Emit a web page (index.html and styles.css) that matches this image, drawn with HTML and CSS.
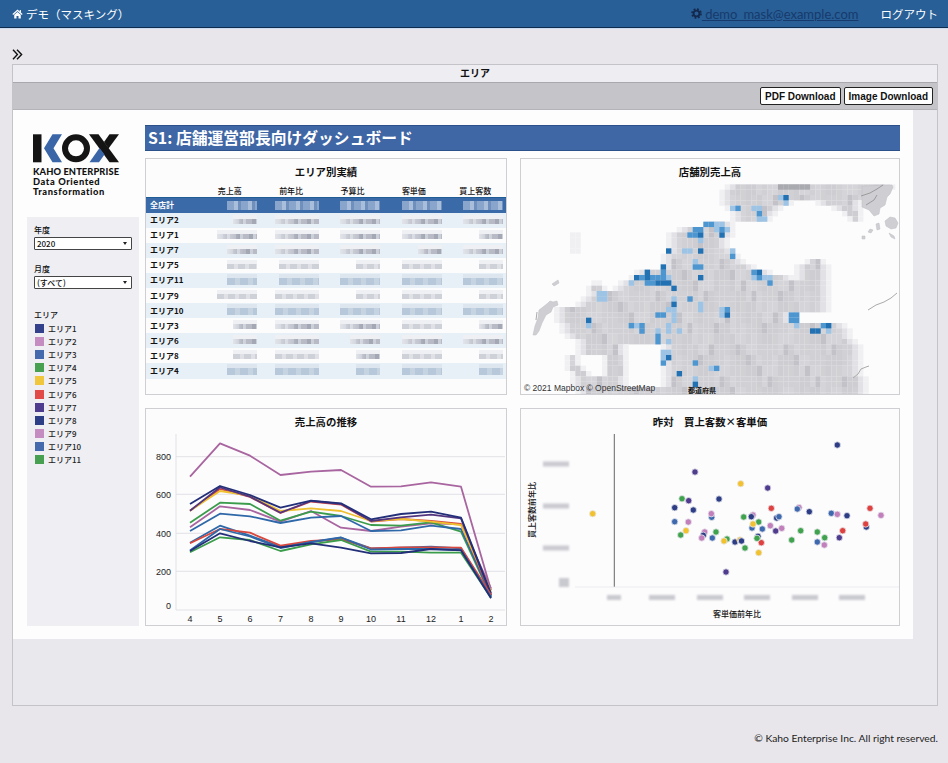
FILE: index.html
```html
<!DOCTYPE html>
<html lang="ja">
<head>
    <meta charset="UTF-8">
    <meta name="viewport" content="width=device-width, initial-scale=1.0">
    <title>デモ（マスキング）</title>
    <link rel="stylesheet" href="styles.css">
</head>
<body>
    <div class="navbar">
        <div class="brand">
            <svg class="home-icon" viewBox="0 0 12 11"><polyline points="0.8,6 6,1.4 11.2,6" fill="none" stroke="#fff" stroke-width="1.3"/><rect x="8.4" y="1.2" width="1.4" height="2.8" fill="#fff"/><path d="M2.4 6.3L6 3.2l3.6 3.1V10.4H7.1V7.6H4.9v2.8H2.4z" fill="#fff"/></svg>
            <span>デモ（マスキング）</span>
        </div>
        <div class="nav-right">
            <svg class="gear-icon" viewBox="0 0 12 12"><circle cx="6" cy="6" r="3.2" fill="none" stroke="#14294d" stroke-width="2"/><circle cx="6" cy="6" r="4.8" fill="none" stroke="#14294d" stroke-width="2" stroke-dasharray="2 1.77"/></svg>
            <a class="user-mail" href="#">&nbsp;demo_mask@example.com</a>
            <span class="logout">ログアウト</span>
        </div>
    </div>

    <div class="toggle-row">
        <svg class="toggle-icon" viewBox="0 0 11 11"><polyline points="1,0.8 5.4,5.5 1,10.2" fill="none" stroke="#111" stroke-width="1.4"/><polyline points="5,0.8 9.6,5.5 5,10.2" fill="none" stroke="#111" stroke-width="1.4"/></svg>
    </div>

    <div class="panel">
        <div class="tab-title">エリア</div>
        <div class="toolbar">
            <button class="tool-button" type="button">PDF Download</button>
            <button class="tool-button" type="button">Image Download</button>
        </div>

        <div class="dashboard">
            <div class="side">
                <div class="logo">
                    <svg class="logo-mark" viewBox="33 134 86 29">
                        <rect x="33" y="134.3" width="8.5" height="28" fill="#141414"/>
                        <polygon points="62,134.3 52.5,134.3 44,148.3 52.5,162.3 62,162.3 53.5,148.3" fill="#3a66a8"/>
                        <circle cx="76" cy="148.3" r="11" fill="none" stroke="#141414" stroke-width="6"/>
                        <polygon points="89,134.3 98.5,134.3 119,162.3 109.5,162.3" fill="#141414"/>
                        <polygon points="109.5,134.3 119,134.3 108.5,148.5 104,142" fill="#141414"/>
                        <polygon points="99.5,148 104.5,154.5 99,162.3 89.5,162.3" fill="#3a66a8"/>
                    </svg>
                    <div class="logo-name">KAHO ENTERPRISE</div>
                    <div class="logo-sub">Data Oriented</div>
                    <div class="logo-sub">Transformation</div>
                </div>
                <div class="filters">
                    <div class="filter-label">年度</div>
                    <div class="select-box"><span>2020</span><i class="caret"></i></div>
                    <div class="filter-label month-label">月度</div>
                    <div class="select-box"><span>(すべて)</span><i class="caret"></i></div>
                    <div class="filter-label area-label">エリア</div>
                    <ul class="legend">
                        <li><i class="swatch c1"></i>エリア1</li>
                        <li><i class="swatch c2"></i>エリア2</li>
                        <li><i class="swatch c3"></i>エリア3</li>
                        <li><i class="swatch c4"></i>エリア4</li>
                        <li><i class="swatch c5"></i>エリア5</li>
                        <li><i class="swatch c6"></i>エリア6</li>
                        <li><i class="swatch c7"></i>エリア7</li>
                        <li><i class="swatch c8"></i>エリア8</li>
                        <li><i class="swatch c2"></i>エリア9</li>
                        <li><i class="swatch c3"></i>エリア10</li>
                        <li><i class="swatch c4"></i>エリア11</li>
                    </ul>
                </div>
            </div>

            <div class="main">
                <h1 class="board-title">S1: 店舗運営部長向けダッシュボード</h1>
                <div class="cards">
                    <div class="card">
                        <div class="card-title">エリア別実績</div>
                        <table class="area-table">
                            <thead>
                                <tr><th></th><th>売上高</th><th>前年比</th><th>予算比</th><th>客単価</th><th>買上客数</th></tr>
                            </thead>
                            <tbody>
                                <tr class="total"><td>全店計</td><td><span class="mask w1"></span></td><td><span class="mask w3"></span></td><td><span class="mask w2"></span></td><td><span class="mask w2"></span></td><td><span class="mask w2"></span></td></tr>
                                <tr><td>エリア2</td><td><span class="mask w4"></span></td><td><span class="mask w3"></span></td><td><span class="mask w2"></span></td><td><span class="mask w2"></span></td><td><span class="mask w2"></span></td></tr>
                                <tr><td>エリア1</td><td><span class="mask w2"></span></td><td><span class="mask w3"></span></td><td><span class="mask w2"></span></td><td><span class="mask w2"></span></td><td><span class="mask w4"></span></td></tr>
                                <tr><td>エリア7</td><td><span class="mask w1"></span></td><td><span class="mask w3"></span></td><td><span class="mask w2"></span></td><td><span class="mask w4"></span></td><td><span class="mask w2"></span></td></tr>
                                <tr><td>エリア5</td><td><span class="mask w1 pale"></span></td><td><span class="mask w2 pale"></span></td><td><span class="mask w4 pale"></span></td><td><span class="mask w2 pale"></span></td><td><span class="mask w4 pale"></span></td></tr>
                                <tr><td>エリア11</td><td><span class="mask w1 blue"></span></td><td><span class="mask w2 blue"></span></td><td><span class="mask w2 blue"></span></td><td><span class="mask w2 blue"></span></td><td><span class="mask w2 blue"></span></td></tr>
                                <tr><td>エリア9</td><td><span class="mask w2 pale"></span></td><td><span class="mask w3 pale"></span></td><td><span class="mask w4 pale"></span></td><td><span class="mask w2 pale"></span></td><td><span class="mask w4 pale"></span></td></tr>
                                <tr><td>エリア10</td><td><span class="mask w1 blue"></span></td><td><span class="mask w3 blue"></span></td><td><span class="mask w2 blue"></span></td><td><span class="mask w2 blue"></span></td><td><span class="mask w2 blue"></span></td></tr>
                                <tr><td>エリア3</td><td><span class="mask w4"></span></td><td><span class="mask w3"></span></td><td><span class="mask w2"></span></td><td><span class="mask w2 pale"></span></td><td><span class="mask w4"></span></td></tr>
                                <tr><td>エリア6</td><td><span class="mask w4"></span></td><td><span class="mask w3"></span></td><td><span class="mask w1"></span></td><td><span class="mask w2"></span></td><td><span class="mask w2"></span></td></tr>
                                <tr><td>エリア8</td><td><span class="mask w4 pale"></span></td><td><span class="mask w3 pale"></span></td><td><span class="mask w4"></span></td><td><span class="mask w2 pale"></span></td><td><span class="mask w4 pale"></span></td></tr>
                                <tr><td>エリア4</td><td><span class="mask w1 blue"></span></td><td><span class="mask w3 blue"></span></td><td><span class="mask w4 blue"></span></td><td><span class="mask w2 blue"></span></td><td><span class="mask w4 blue"></span></td></tr>
                            </tbody>
                        </table>
                    </div>

                    <div class="card">
                        <div class="card-title">店舗別売上高</div>
                        <svg id="store-map" class="chart" viewBox="521 184 378 210">
                            <g id="map-cells"></g>
                            <path class="coast" d="M862 186l30-1 1 2-3 7-3 3-2 8-5 3-1 6-5 2-5-6-7-3z"/>
                            <path class="coast-line" d="M861 196l9-3 7-4 6-4M866 205l8-5 3-5"/>
                            <path class="coast" d="M885 221l5-4 5 1 3 5-2 5-5 1-5-3zM876 224l3-1 1 6-3 1zM870 229l3 1-2 3-3-1zM889 233l5 3 1 3-4-2zM862 236l3 0 0 3-3 0z"/>
                            <path class="coast-thin" d="M868 310l8-5 8-3 7-4 6-5"/>
                            <path class="coast" d="M533 335l2-9 3-8 1-8 4-3 5-4 2-2 3 1 4-1 1 4-5 2-2 5-5 3-4 8-3 8-3 4zM552 284l6-4 1 3-5 3z"/>
                            <path class="coast-thin" d="M853 378l5-4 3-5 5-2 3-1M537 312l-1 8"/>
                            <text class="map-credit" x="524" y="391">© 2021 Mapbox © OpenStreetMap</text>
                            <text class="map-field" x="688" y="393">都道府県</text>
                        </svg>
                    </div>

                    <div class="card">
                        <div class="card-title">売上高の推移</div>
                        <svg class="chart" viewBox="146 434 360 191">
                            <g class="grid-lines">
                                <line x1="176" y1="456.7" x2="505" y2="456.7"/>
                                <line x1="176" y1="494.3" x2="505" y2="494.3"/>
                                <line x1="176" y1="533.3" x2="505" y2="533.3"/>
                                <line x1="176" y1="571.3" x2="505" y2="571.3"/>
                                <line x1="176" y1="610" x2="505" y2="610"/>
                                <line x1="176" y1="434" x2="176" y2="610"/>
                            </g>
                            <g class="tick-text end">
                                <text x="171" y="460">800</text>
                                <text x="171" y="498">600</text>
                                <text x="171" y="537">400</text>
                                <text x="171" y="575">200</text>
                                <text x="171" y="609">0</text>
                            </g>
                            <g class="tick-text middle">
                                <text x="190" y="622">4</text>
                                <text x="220" y="622">5</text>
                                <text x="250" y="622">6</text>
                                <text x="280.5" y="622">7</text>
                                <text x="311" y="622">8</text>
                                <text x="341" y="622">9</text>
                                <text x="371" y="622">10</text>
                                <text x="401" y="622">11</text>
                                <text x="431" y="622">12</text>
                                <text x="461" y="622">1</text>
                                <text x="491" y="622">2</text>
                            </g>
                            <g class="series">
                                <polyline class="l-pink" points="190,476.7 220,443.3 250,455.7 280.5,475 311,471.7 341,470 371,486.7 401,486.3 431,482.3 461,486.7 491,590"/>
                                <polyline class="l-pink" points="190,527.3 220,506.3 250,510 280.5,521.7 311,511 341,527.7 371,531 401,526.7 431,523.3 461,524.3 491,588.3"/>
                                <polyline class="l-green" points="190,522.7 220,502.7 250,504 280.5,520.7 311,511.7 341,516 371,525 401,525.7 431,522.3 461,531.7 491,596.7"/>
                                <polyline class="l-blue" points="190,531 220,513.7 250,516.3 280.5,523 311,517.7 341,516 371,531 401,530.3 431,525.7 461,529 491,595.7"/>
                                <polyline class="l-red" points="190,510.7 220,489 250,497 280.5,513 311,501.5 341,504.5 371,521.5 401,519 431,521 461,524 491,595"/>
                                <polyline class="l-yellow" points="190,510.7 220,491 250,495.7 280.5,511 311,508.3 341,511 371,521 401,519 431,521.7 461,525 491,591.7"/>
                                <polyline class="l-purple" points="190,510.7 220,487.3 250,496.7 280.5,512.7 311,501 341,504 371,521 401,517.3 431,514.7 461,518.3 491,595"/>
                                <polyline class="l-navy" points="190,504 220,486 250,495 280.5,507.7 311,500.7 341,503.3 371,519.3 401,514 431,511.7 461,517.7 491,593.3"/>
                                <polyline class="l-blue" points="190,542.7 220,525.7 250,535.7 280.5,546.7 311,542.3 341,537.7 371,548.3 401,547.7 431,546.7 461,548.3 491,596.7"/>
                                <polyline class="l-red" points="190,543.3 220,529 250,532.7 280.5,545.7 311,541 341,539.3 371,548.3 401,547.3 431,547.3 461,547.7 491,595"/>
                                <polyline class="l-green" points="190,552.3 220,537.3 250,540 280.5,551 311,544.3 341,540 371,551.7 401,551.7 431,552.7 461,552.7 491,597.7"/>
                                <polyline class="l-blue" points="190,550.5 220,529 250,536.5 280.5,548 311,542 341,537.5 371,549.5 401,549 431,549 461,550 491,597"/>
                                <polyline class="l-navy" points="190,551 220,533.3 250,541 280.5,547.3 311,543.3 341,547.7 371,553.3 401,553 431,549 461,550.3 491,598.3"/>
                            </g>
                        </svg>
                    </div>

                    <div class="card">
                        <div class="card-title">昨対　買上客数×客単価</div>
                        <svg class="chart" viewBox="521 434 378 191">
                            <line class="base-line" x1="575" y1="587" x2="899" y2="587"/>
                            <line class="zero-line" x1="614.3" y1="434" x2="614.3" y2="586.7"/>
                            <g class="blur-ticks">
                                <rect x="543" y="461.5" width="26" height="5"/>
                                <rect x="543" y="503.5" width="26" height="5"/>
                                <rect x="543" y="545.5" width="26" height="5"/>
                                <rect x="559" y="578" width="10" height="9"/>
                                <rect x="607" y="595" width="14" height="5"/>
                                <rect x="649" y="595" width="26" height="5"/>
                                <rect x="697" y="595" width="26" height="5"/>
                                <rect x="744" y="595" width="26" height="5"/>
                                <rect x="792" y="595" width="26" height="5"/>
                                <rect x="839" y="595" width="26" height="5"/>
                            </g>
                            <text class="axis-title" x="737" y="617">客単価前年比</text>
                            <text class="axis-title" transform="translate(535 510) rotate(-90)">買上客数前年比</text>
                            <g class="dots">
                                <circle class="d-navy" cx="837.3" cy="445" r="3.2"/>
                                <circle class="d-purple" cx="695" cy="472" r="3.2"/>
                                <circle class="d-yellow" cx="740.7" cy="483.7" r="3.2"/>
                                <circle class="d-purple" cx="767.7" cy="488" r="3.2"/>
                                <circle class="d-green" cx="682" cy="498.7" r="3.2"/>
                                <circle class="d-purple" cx="688.7" cy="500.7" r="3.2"/>
                                <circle class="d-navy" cx="719" cy="499" r="3.2"/>
                                <circle class="d-navy" cx="674.7" cy="507.7" r="3.2"/>
                                <circle class="d-navy" cx="693.3" cy="510" r="3.2"/>
                                <circle class="d-red" cx="771.3" cy="508.3" r="3.2"/>
                                <circle class="d-pink" cx="799" cy="507.5" r="3.2"/>
                                <circle class="d-blue" cx="797.3" cy="509" r="3.2"/>
                                <circle class="d-navy" cx="809.3" cy="511.7" r="3.2"/>
                                <circle class="d-blue" cx="831.3" cy="513.3" r="3.2"/>
                                <circle class="d-pink" cx="837.3" cy="514.3" r="3.2"/>
                                <circle class="d-navy" cx="847" cy="515.7" r="3.2"/>
                                <circle class="d-red" cx="870" cy="508.3" r="3.2"/>
                                <circle class="d-pink" cx="881" cy="515.3" r="3.2"/>
                                <circle class="d-yellow" cx="592.7" cy="513.7" r="3.2"/>
                                <circle class="d-blue" cx="711.7" cy="517.3" r="3.2"/>
                                <circle class="d-pink" cx="711.3" cy="513.7" r="3.2"/>
                                <circle class="d-green" cx="743.7" cy="517" r="3.2"/>
                                <circle class="d-pink" cx="753" cy="515" r="3.2"/>
                                <circle class="d-navy" cx="751.3" cy="516.7" r="3.2"/>
                                <circle class="d-navy" cx="776.7" cy="518" r="3.2"/>
                                <circle class="d-blue" cx="779" cy="516.7" r="3.2"/>
                                <circle class="d-blue" cx="674.7" cy="521.7" r="3.2"/>
                                <circle class="d-pink" cx="688.3" cy="522" r="3.2"/>
                                <circle class="d-green" cx="758.7" cy="522" r="3.2"/>
                                <circle class="d-blue" cx="752" cy="528" r="3.2"/>
                                <circle class="d-yellow" cx="753" cy="524" r="3.2"/>
                                <circle class="d-pink" cx="770.3" cy="525.7" r="3.2"/>
                                <circle class="d-blue" cx="762.3" cy="529" r="3.2"/>
                                <circle class="d-navy" cx="866.3" cy="527" r="3.2"/>
                                <circle class="d-red" cx="865.7" cy="524" r="3.2"/>
                                <circle class="d-yellow" cx="686" cy="530.7" r="3.2"/>
                                <circle class="d-green" cx="680.7" cy="535" r="3.2"/>
                                <circle class="d-pink" cx="704.7" cy="532" r="3.2"/>
                                <circle class="d-green" cx="716" cy="532" r="3.2"/>
                                <circle class="d-pink" cx="781.7" cy="528.3" r="3.2"/>
                                <circle class="d-purple" cx="775.7" cy="531" r="3.2"/>
                                <circle class="d-green" cx="800.7" cy="530.7" r="3.2"/>
                                <circle class="d-green" cx="817.3" cy="532" r="3.2"/>
                                <circle class="d-red" cx="842.7" cy="530.7" r="3.2"/>
                                <circle class="d-navy" cx="703.3" cy="535.3" r="3.2"/>
                                <circle class="d-pink" cx="701.7" cy="538" r="3.2"/>
                                <circle class="d-blue" cx="712.3" cy="538" r="3.2"/>
                                <circle class="d-green" cx="727" cy="539" r="3.2"/>
                                <circle class="d-yellow" cx="724" cy="541" r="3.2"/>
                                <circle class="d-navy" cx="735" cy="542" r="3.2"/>
                                <circle class="d-yellow" cx="740" cy="540" r="3.2"/>
                                <circle class="d-navy" cx="741.5" cy="541" r="3.2"/>
                                <circle class="d-red" cx="761.3" cy="542.7" r="3.2"/>
                                <circle class="d-navy" cx="758" cy="536.3" r="3.2"/>
                                <circle class="d-green" cx="757" cy="538.3" r="3.2"/>
                                <circle class="d-green" cx="791.7" cy="540" r="3.2"/>
                                <circle class="d-blue" cx="817.3" cy="542" r="3.2"/>
                                <circle class="d-green" cx="824.7" cy="537.7" r="3.2"/>
                                <circle class="d-purple" cx="839.3" cy="537.7" r="3.2"/>
                                <circle class="d-pink" cx="824.3" cy="545" r="3.2"/>
                                <circle class="d-green" cx="745" cy="548" r="3.2"/>
                                <circle class="d-yellow" cx="758.7" cy="552.7" r="3.2"/>
                                <circle class="d-purple" cx="726" cy="572" r="3.2"/>
                            </g>
                        </svg>
                    </div>
                </div>
            </div>
        </div>
    </div>

    <div class="footer">© Kaho Enterprise Inc. All right reserved.</div>

    <script src="map.js"></script>
</body>
</html>
```

FILE: styles.css
```css
body {
    font-family: "Noto Sans CJK JP", "Noto Sans", sans-serif;
    margin: 0;
    padding: 0;
    background-color: #e8e6eb;
    color: #111;
}
.navbar {
    height: 27px;
    background-color: #285f97;
    border-bottom: 1px solid #0f2b50;
    box-shadow: 0 1px 0 #cddcf0;
    color: white;
    padding: 0 10px 0 12px;
    display: flex;
    justify-content: space-between;
    align-items: center;
    font-size: 11.5px;
}
.brand {
    display: flex;
    align-items: center;
    gap: 3px;
}
.home-icon {
    width: 11px;
    height: 10px;
}
.nav-right {
    display: flex;
    align-items: center;
}
.gear-icon {
    width: 11px;
    height: 11px;
}
.user-mail {
    font-family: Lato, sans-serif;
    font-size: 13px;
    color: #173a6c;
    margin-right: 22px;
}
.toggle-row {
    height: 36px;
    padding-left: 12px;
    display: flex;
    align-items: flex-end;
}
.toggle-icon {
    width: 11px;
    height: 11px;
    margin-bottom: 4px;
}
.panel {
    margin: 0 10px 0 12px;
    height: 640px;
    border: 1px solid #c3c3c8;
    background-color: #e9e8ed;
}
.tab-title {
    height: 17px;
    line-height: 16px;
    text-align: center;
    font-size: 10px;
    font-weight: 700;
    background-color: #eeedf1;
}
.toolbar {
    height: 28px;
    box-sizing: border-box;
    border-top: 1px solid #a9a9ad;
    border-bottom: 1px solid #b4b4b8;
    background-color: #c5c5c9;
    display: flex;
    justify-content: flex-end;
    align-items: center;
    gap: 3px;
    padding-right: 4px;
}
.tool-button {
    height: 18px;
    padding: 0 4px;
    background-color: #fff;
    color: #111;
    border: 1px solid #222;
    border-radius: 2px;
    font-family: "Liberation Sans", Arial, sans-serif;
    font-size: 10px;
    font-weight: 700;
}
.dashboard {
    width: 900px;
    height: 529px;
    box-sizing: border-box;
    padding: 15px 13px 13px 14px;
    background-color: #fdfdfe;
    display: flex;
    gap: 6px;
}
.side {
    width: 112px;
    display: flex;
    flex-direction: column;
}
.logo {
    height: 92px;
    padding: 9px 0 0 6px;
    box-sizing: border-box;
}
.logo-mark {
    display: block;
    width: 86px;
    height: 29px;
    margin-bottom: 4px;
}
.logo-name,
.logo-sub {
    font-family: Lato, sans-serif;
    font-weight: 900;
    color: #111;
    line-height: 10px;
}
.logo-name {
    font-size: 9.3px;
    letter-spacing: 0.1px;
}
.logo-sub {
    font-size: 9.3px;
    letter-spacing: 0.6px;
}
.filters {
    flex: 1;
    background-color: #eeeef3;
    padding: 7px 7px 0;
    font-size: 8px;
    font-weight: 500;
}
.filter-label {
    line-height: 12px;
    margin-bottom: 1px;
}
.month-label {
    margin-top: 13px;
}
.area-label {
    margin-top: 20px;
}
.select-box {
    height: 13px;
    box-sizing: border-box;
    border: 1px solid #444;
    border-radius: 1px;
    background-color: #fff;
    padding: 0 4px 0 2px;
    display: flex;
    justify-content: space-between;
    align-items: center;
    font-size: 8px;
}
.caret {
    width: 0;
    height: 0;
    border-left: 2.5px solid transparent;
    border-right: 2.5px solid transparent;
    border-top: 3px solid #222;
}
.legend {
    list-style: none;
    margin: 0;
    padding: 0 0 0 1px;
}
.legend li {
    height: 13.1px;
    display: flex;
    align-items: center;
    gap: 4px;
    font-size: 8px;
    color: #222;
}
.swatch {
    width: 9px;
    height: 9px;
    border: 0;
}
.c1 { background-color: #33418c; }
.c2 { background-color: #c48cc0; }
.c3 { background-color: #4469ad; }
.c4 { background-color: #47a04f; }
.c5 { background-color: #f0c63c; }
.c6 { background-color: #e24a47; }
.c7 { background-color: #503c8e; }
.c8 { background-color: #2d3e86; }
.main {
    flex: 1;
    display: flex;
    flex-direction: column;
}
.board-title {
    margin: 0 0 7px;
    height: 26px;
    box-sizing: border-box;
    line-height: 24px;
    padding-left: 3px;
    font-size: 15.8px;
    font-weight: 700;
    color: #fff;
    background-color: #3f66a5;
    border-top: 1px solid #2c5089;
    border-bottom: 1px solid #2c5089;
}
.cards {
    flex: 1;
    display: grid;
    grid-template-columns: 362px 380px;
    grid-template-rows: 237px 218px;
    gap: 13px;
}
.card {
    border: 1px solid #cfcfd3;
    background-color: #fcfcfd;
    display: flex;
    flex-direction: column;
    overflow: hidden;
}
.card-title {
    height: 25px;
    line-height: 25px;
    text-align: center;
    font-size: 10.4px;
    font-weight: 700;
    flex: none;
}
.chart {
    display: block;
    flex: 1;
    min-height: 0;
    width: 100%;
}
.area-table {
    width: 100%;
    table-layout: fixed;
    border-collapse: collapse;
    font-size: 8px;
}
.area-table th {
    height: 13px;
    padding: 0;
    font-weight: 500;
    line-height: 10px;
    width: 61.3px;
}
.area-table th:first-child {
    width: 53px;
}
.area-table td {
    height: 15.1px;
    padding: 0 3px 0 0;
    line-height: 10px;
}
.area-table td:first-child {
    padding-left: 4px;
    font-weight: 700;
}
.area-table tbody tr:nth-child(even) {
    background-color: #e8f0f7;
}
.area-table tbody tr.total {
    background-color: #3a6aa8;
    color: #fff;
}
.area-table .total td {
    height: 14.5px;
    border-top: 1px solid #1f5d94;
}
.mask {
    display: block;
    margin: 2px 0 0 auto;
    height: 5px;
    background:
        linear-gradient(90deg, rgba(240, 242, 246, 0.75), rgba(240, 242, 246, 0) 55%),
        repeating-linear-gradient(90deg, #b8bbc6 0 6px, #a4a8b5 6px 10px, #ccd0d8 10px 13px);
    box-shadow: 0 -4px 0 #eef0f4;
    filter: blur(0.6px);
}
.w1 { width: 30px; }
.w2 { width: 40px; }
.w3 { width: 44px; }
.w4 { width: 24px; }
.mask.pale {
    background: repeating-linear-gradient(90deg, #cfd1d8 0 7px, #dfe1e6 7px 11px);
}
.mask.blue {
    height: 7px;
    background: repeating-linear-gradient(90deg, #b7c8da 0 8px, #c6d4e2 8px 13px);
    box-shadow: 0 -4px 0 #dde6ef;
}
.total .mask {
    margin-top: 0;
    height: 9px;
    background: repeating-linear-gradient(90deg, #8aa5cb 0 7px, #a9bedb 7px 11px, #6f90bd 11px 14px);
    box-shadow: none;
}
.grid-lines line {
    stroke: #e2e2e6;
    stroke-width: 1;
}
.tick-text text {
    font-family: "Liberation Sans", Arial, sans-serif;
    font-size: 9px;
    fill: #222;
}
.tick-text.end text {
    text-anchor: end;
}
.tick-text.middle text {
    text-anchor: middle;
}
.series polyline {
    fill: none;
    stroke-width: 1.8;
    stroke-linejoin: round;
}
.l-pink { stroke: #a8659f; }
.l-green { stroke: #3b9c4b; }
.l-blue { stroke: #2f68a8; }
.l-yellow { stroke: #efc02f; }
.l-purple { stroke: #53357f; }
.l-red { stroke: #d9483e; }
.l-navy { stroke: #232f78; }
.base-line {
    stroke: #ececf0;
}
.zero-line {
    stroke: #666;
}
.blur-ticks rect {
    fill: #c9c9d0;
    filter: blur(0.8px);
}
.axis-title {
    font-size: 8px;
    font-weight: 500;
    text-anchor: middle;
    fill: #111;
}
.dots circle {
    stroke: #e8e8ee;
    stroke-width: 0.8;
}
.d-navy { fill: #2d3e86; }
.d-purple { fill: #503c8e; }
.d-blue { fill: #3f69ae; }
.d-green { fill: #3fa34d; }
.d-yellow { fill: #f1c12e; }
.d-red { fill: #df4140; }
.d-pink { fill: #c17fbb; }
.coast {
    fill: #cfcfd3;
    stroke: #bdbdc2;
    stroke-width: 0.5;
}
.coast-line {
    fill: none;
    stroke: #777;
    stroke-width: 0.6;
}
.coast-thin {
    fill: none;
    stroke: #aaa;
    stroke-width: 1;
}
.map-credit {
    font-family: "Liberation Sans", Arial, sans-serif;
    font-size: 8.5px;
    fill: #333;
}
.map-field {
    font-size: 7px;
    font-weight: 700;
    fill: #111;
}
.footer {
    padding: 26px 10px 0 0;
    text-align: right;
    font-family: Lato, sans-serif;
    font-size: 10.3px;
    color: #222;
}
```

FILE: map.js
```js
// land runs per row: [first column, last column], 5.33px cells
var land = [
    [[38, 69]], [[37, 67]], [[37, 65]], [[37, 50], [55, 63]], [[38, 48], [58, 63]],
    [[39, 47], [60, 63]], [[39, 46], [61, 63]], [[34, 39]], [[29, 39]], [[9, 10], [27, 39]],
    [[9, 10], [27, 38]], [[9, 10], [27, 38]], [[9, 10], [27, 39]], [[26, 40]], [[26, 41], [53, 56]],
    [[26, 43], [51, 57]], [[21, 46], [51, 57]], [[20, 50], [51, 57]], [[13, 14], [18, 57]], [[12, 15], [17, 57]],
    [[12, 57]], [[11, 57]], [[10, 57]], [[6, 57]], [[6, 50]],
    [[6, 50]], [[7, 60]], [[7, 61]], [[8, 61]], [[10, 62]],
    [[10, 19], [26, 63]], [[10, 19], [26, 63]], [[8, 10], [15, 19], [26, 63]], [[8, 10], [15, 19], [26, 63]], [[8, 11], [15, 19], [26, 63]],
    [[9, 12], [15, 19], [26, 63]], [[9, 19], [26, 64]], [[9, 19], [26, 64]], [[10, 64]], [[10, 64]]
];

// d = dark, m = mid, l = light
var stores = {
    d: "49,2 33,9 27,12 33,12 26,15 23,16 21,17 23,17 33,17 25,18 26,18 27,18 28,19 28,22 38,24 12,25 57,26 54,27 55,27 27,32 29,35 32,37 37,9 44,16",
    m: "40,4 44,5 34,7 35,7 32,8 33,8 37,8 31,9 32,9 39,13 32,15 33,15 26,16 43,16 22,17 24,17 25,17 26,17 44,17 23,18 24,18 46,18 31,21 38,23 25,24 26,24 50,24 51,24 50,25 51,25 20,26 22,26 56,26 22,27 25,28 25,29 26,33 32,33 36,34",
    l: "48,2 49,3 39,4 43,4 44,4 44,6 45,6 36,7 37,7 36,8 38,8 33,10 30,12 31,12 39,12 32,14 27,17 43,17 45,17 46,17 20,18 14,20 15,20 14,21 15,21 28,21 33,22 27,23 28,23 33,23 28,24 37,23 37,24 28,25 12,26 21,26 27,26 25,27 27,27 29,27 57,27 27,29 26,31 27,31 26,32 35,34 32,36 51,26"
};
var blues = { d: "#2271b3", m: "#4d96d0", l: "#9ec4e5" };
var NS = "http://www.w3.org/2000/svg";
var group = document.getElementById("map-cells");

function addCell(col, row, color) {
    var rect = document.createElementNS(NS, "rect");
    rect.setAttribute("x", 522 + col * 5.333);
    rect.setAttribute("y", 184.33 + row * 5.333);
    rect.setAttribute("width", 5.4);
    rect.setAttribute("height", 5.4);
    rect.setAttribute("fill", color);
    group.appendChild(rect);
}

function landShade(col, row, first, last) {
    var edge = Math.min(col - first, last - col);
    if (edge === 0) return "#f0f0f3";
    if (edge === 1 && last - first > 4) return "#e2e2e6";
    // blocks of a few cells, the source is a soft mosaic and not a checkerboard
    var noise = (Math.floor(col / 3) * 7 + Math.floor(row / 2) * 13 + col * 5 % 4) % 11;
    if (noise === 0) return "#c2c2c8";
    if (noise < 4) return "#cdcdd2";
    if (noise < 8) return "#d1d1d5";
    return "#d5d5d9";
}

land.forEach(function (runs, row) {
    runs.forEach(function (run) {
        for (var col = run[0]; col <= run[1]; col++) {
            addCell(col, row, landShade(col, row, run[0], run[1]));
        }
    });
});

// the dark smudge along the top edge
for (var i = 48; i <= 53; i++) {
    addCell(i, 0, "#a9a9b0");
}

["l", "m", "d"].forEach(function (key) {
    stores[key].split(" ").forEach(function (pair) {
        var parts = pair.split(",");
        addCell(Number(parts[0]), Number(parts[1]), blues[key]);
    });
});
```
